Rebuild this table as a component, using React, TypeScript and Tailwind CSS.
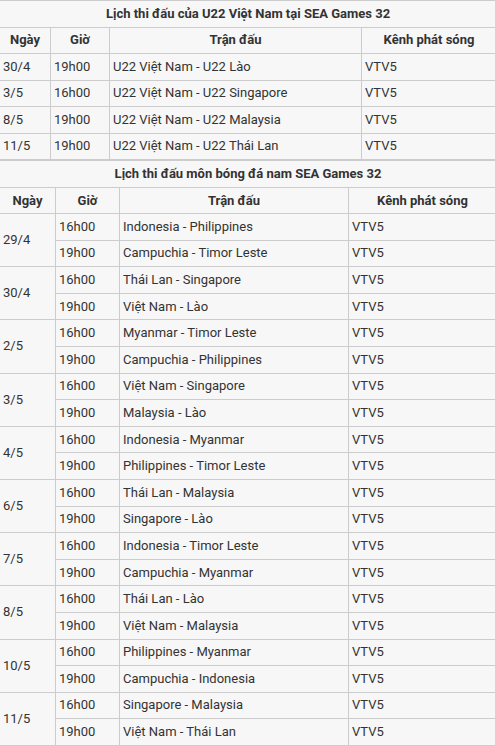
import React from "react";

const t1 = [
  ["30/4", "19h00", "U22 Việt Nam - U22 Lào", "VTV5"],
  ["3/5", "16h00", "U22 Việt Nam - U22 Singapore", "VTV5"],
  ["8/5", "19h00", "U22 Việt Nam - U22 Malaysia", "VTV5"],
  ["11/5", "19h00", "U22 Việt Nam - U22 Thái Lan", "VTV5"],
];

const t2: [string, [string, string][]][] = [
  ["29/4", [["16h00", "Indonesia - Philippines"], ["19h00", "Campuchia - Timor Leste"]]],
  ["30/4", [["16h00", "Thái Lan - Singapore"], ["19h00", "Việt Nam - Lào"]]],
  ["2/5", [["16h00", "Myanmar - Timor Leste"], ["19h00", "Campuchia - Philippines"]]],
  ["3/5", [["16h00", "Việt Nam - Singapore"], ["19h00", "Malaysia - Lào"]]],
  ["4/5", [["16h00", "Indonesia - Myanmar"], ["19h00", "Philippines - Timor Leste"]]],
  ["6/5", [["16h00", "Thái Lan - Malaysia"], ["19h00", "Singapore - Lào"]]],
  ["7/5", [["16h00", "Indonesia - Timor Leste"], ["19h00", "Campuchia - Myanmar"]]],
  ["8/5", [["16h00", "Thái Lan - Lào"], ["19h00", "Việt Nam - Malaysia"]]],
  ["10/5", [["16h00", "Philippines - Myanmar"], ["19h00", "Campuchia - Indonesia"]]],
  ["11/5", [["16h00", "Singapore - Malaysia"], ["19h00", "Việt Nam - Thái Lan"]]],
];

const cell = "border border-[#cccccc] px-[3px] py-0 align-middle text-left font-normal";
const head = "border border-[#cccccc] px-[3px] py-0 align-middle text-center font-bold";

export default function App() {
  return (
    <div
      className="w-[495px] min-h-[746px] bg-[#f7f7f7] text-[#333333] text-[13px] leading-[20px] overflow-hidden"
      style={{ fontFamily: "Roboto, 'Noto Sans', sans-serif" }}
    >
      <table className="border-collapse w-[497px] ml-[-1px] table-fixed">
        <colgroup>
          <col className="w-[51px]" />
          <col className="w-[59px]" />
          <col className="w-[252px]" />
          <col className="w-[135px]" />
        </colgroup>
        <tbody>
          <tr className="h-[26.5px]">
            <td colSpan={4} className={head}>Lịch thi đấu của U22 Việt Nam tại SEA Games 32</td>
          </tr>
          <tr className="h-[26.5px]">
            <td className={head}>Ngày</td>
            <td className={head}>Giờ</td>
            <td className={head}>Trận đấu</td>
            <td className={head}>Kênh phát sóng</td>
          </tr>
          {t1.map((r) => (
            <tr key={r[0]} className="h-[26.5px]">
              {r.map((c, i) => (
                <td key={i} className={cell}>{c}</td>
              ))}
            </tr>
          ))}
        </tbody>
      </table>
      <table className="border-collapse w-[497px] ml-[-1px] table-fixed">
        <colgroup>
          <col className="w-[56px]" />
          <col className="w-[64px]" />
          <col className="w-[229px]" />
          <col className="w-[148px]" />
        </colgroup>
        <tbody>
          <tr className="h-[27px]">
            <td colSpan={4} className={head}>Lịch thi đấu môn bóng đá nam SEA Games 32</td>
          </tr>
          <tr className="h-[26px]">
            <td className={head}>Ngày</td>
            <td className={head}>Giờ</td>
            <td className={head}>Trận đấu</td>
            <td className={head}>Kênh phát sóng</td>
          </tr>
          {t2.map(([d, ms]) =>
            ms.map((m, j) => (
              <tr key={d + j} className="h-[26.6px]">
                {j === 0 && (
                  <td rowSpan={2} className={cell}>{d}</td>
                )}
                <td className={cell}>{m[0]}</td>
                <td className={cell}>{m[1]}</td>
                <td className={cell}>VTV5</td>
              </tr>
            ))
          )}
        </tbody>
      </table>
    </div>
  );
}
